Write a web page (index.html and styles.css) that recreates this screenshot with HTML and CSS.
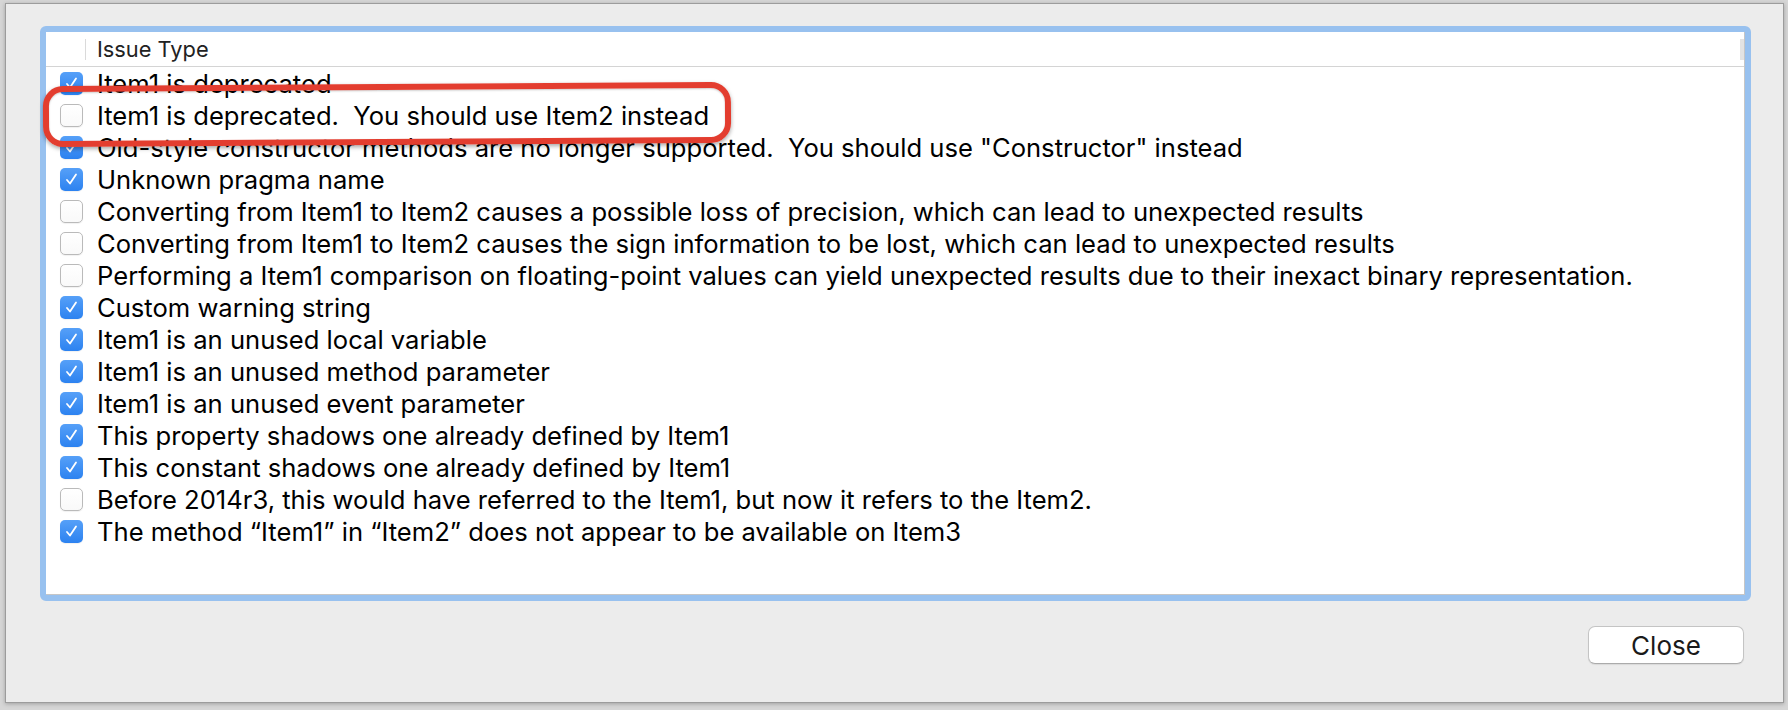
FILE: index.html
```html
<!DOCTYPE html>
<html lang="en">
<head>
    <meta charset="UTF-8">
    <meta name="viewport" content="width=device-width, initial-scale=1.0">
    <title>Issue Types</title>
    <link rel="stylesheet" href="styles.css">
</head>
<body>
    <div class="window">
        <div class="table-frame">
            <div class="table">
                <div class="table-header">
                    <div class="col-check"></div>
                    <div class="col-title">Issue Type</div>
                    <div class="corner"></div>
                </div>
                <ul class="rows">
                    <li class="row"><span class="checkbox checked"><svg viewBox="0 0 23 23"><path d="M7 12l3 3.5 6-9"/></svg></span><span class="label">Item1 is deprecated</span></li>
                    <li class="row"><span class="checkbox"></span><span class="label">Item1 is deprecated.  You should use Item2 instead</span></li>
                    <li class="row"><span class="checkbox checked"><svg viewBox="0 0 23 23"><path d="M7 12l3 3.5 6-9"/></svg></span><span class="label">Old-style constructor methods are no longer supported.  You should use "Constructor" instead</span></li>
                    <li class="row"><span class="checkbox checked"><svg viewBox="0 0 23 23"><path d="M7 12l3 3.5 6-9"/></svg></span><span class="label">Unknown pragma name</span></li>
                    <li class="row"><span class="checkbox"></span><span class="label">Converting from Item1 to Item2 causes a possible loss of precision, which can lead to unexpected results</span></li>
                    <li class="row"><span class="checkbox"></span><span class="label">Converting from Item1 to Item2 causes the sign information to be lost, which can lead to unexpected results</span></li>
                    <li class="row"><span class="checkbox"></span><span class="label">Performing a Item1 comparison on floating-point values can yield unexpected results due to their inexact binary representation.</span></li>
                    <li class="row"><span class="checkbox checked"><svg viewBox="0 0 23 23"><path d="M7 12l3 3.5 6-9"/></svg></span><span class="label">Custom warning string</span></li>
                    <li class="row"><span class="checkbox checked"><svg viewBox="0 0 23 23"><path d="M7 12l3 3.5 6-9"/></svg></span><span class="label">Item1 is an unused local variable</span></li>
                    <li class="row"><span class="checkbox checked"><svg viewBox="0 0 23 23"><path d="M7 12l3 3.5 6-9"/></svg></span><span class="label">Item1 is an unused method parameter</span></li>
                    <li class="row"><span class="checkbox checked"><svg viewBox="0 0 23 23"><path d="M7 12l3 3.5 6-9"/></svg></span><span class="label">Item1 is an unused event parameter</span></li>
                    <li class="row"><span class="checkbox checked"><svg viewBox="0 0 23 23"><path d="M7 12l3 3.5 6-9"/></svg></span><span class="label">This property shadows one already defined by Item1</span></li>
                    <li class="row"><span class="checkbox checked"><svg viewBox="0 0 23 23"><path d="M7 12l3 3.5 6-9"/></svg></span><span class="label">This constant shadows one already defined by Item1</span></li>
                    <li class="row"><span class="checkbox"></span><span class="label">Before 2014r3, this would have referred to the Item1, but now it refers to the Item2.</span></li>
                    <li class="row"><span class="checkbox checked"><svg viewBox="0 0 23 23"><path d="M7 12l3 3.5 6-9"/></svg></span><span class="label">The method “Item1” in “Item2” does not appear to be available on Item3</span></li>
                </ul>
                <div class="callout"></div>
            </div>
        </div>
        <div class="footer">
            <button type="button" class="btn">Close</button>
        </div>
    </div>
</body>
</html>
```

FILE: styles.css
```css
* {
    box-sizing: border-box;
}

body {
    margin: 0;
    height: 710px;
    background: #d6d6d6;
    font-family: 'Inter', 'Liberation Sans', sans-serif;
    overflow: hidden;
}

.window {
    margin: 3px 4px 0 5px;
    height: 700px;
    background-color: #ececec;
    border: 1px solid #9c9c9c;
    box-shadow: 0 1px 4px rgba(0, 0, 0, 0.25);
    padding: 22px 32px 0 34px;
    display: flex;
    flex-direction: column;
}

.table-frame {
    height: 575px;
    border: 6px solid #98c1ef;
    border-radius: 6px;
}

.table {
    position: relative;
    height: 100%;
    background: #fff;
    border-right: 1px solid #c6c6c6;
    border-bottom: 1px solid #c6c6c6;
}

.table-header {
    display: flex;
    align-items: center;
    height: 35px;
    border-bottom: 1px solid #d4d4d4;
}

.col-check {
    width: 40px;
    height: 21px;
    border-right: 1px solid #dadada;
}

.col-title {
    flex: 1;
    padding-left: 11px;
    font-size: 21.8px;
    color: #222;
}

.corner {
    width: 4px;
    height: 21px;
    background: #e3e3e3;
}

.rows {
    list-style: none;
    margin: 0;
    padding: 0;
}

.row {
    display: flex;
    align-items: center;
    height: 32px;
    padding-left: 14px;
}

.checkbox {
    width: 23px;
    height: 23px;
    border-radius: 5px;
    border: 1px solid #bababa;
    background: linear-gradient(#fff, #f9f9f9);
    box-shadow: 0 1px 1px rgba(0, 0, 0, 0.06);
    flex-shrink: 0;
}

.checkbox.checked {
    border: none;
    background: linear-gradient(#56a0f8, #2c82f0);
}

.checkbox svg {
    display: block;
    width: 23px;
    height: 23px;
    fill: none;
    stroke: #fff;
    stroke-width: 1.8;
    stroke-linecap: round;
    stroke-linejoin: round;
}

.label {
    margin-left: 14px;
    font-size: 25.6px;
    color: #000;
    white-space: pre;
}

.callout {
    position: absolute;
    left: -3px;
    top: 52px;
    width: 688px;
    height: 61px;
    border: 6px solid #e33d2f;
    border-radius: 20px;
    transform: rotate(-0.35deg);
    box-shadow: 0 2px 4px rgba(0, 0, 0, 0.35), inset 0 1px 2px rgba(0, 0, 0, 0.2);
}

.footer {
    display: flex;
    justify-content: flex-end;
    padding-top: 25px;
    padding-right: 7px;
}

.btn {
    width: 156px;
    height: 38px;
    background: #fff;
    border: 1px solid #c4c4c4;
    border-bottom-color: #ababab;
    border-radius: 7px;
    box-shadow: 0 1px 1px rgba(0, 0, 0, 0.08);
    font-family: inherit;
    font-size: 26px;
    color: #1a1a1a;
    padding: 0;
}
```
